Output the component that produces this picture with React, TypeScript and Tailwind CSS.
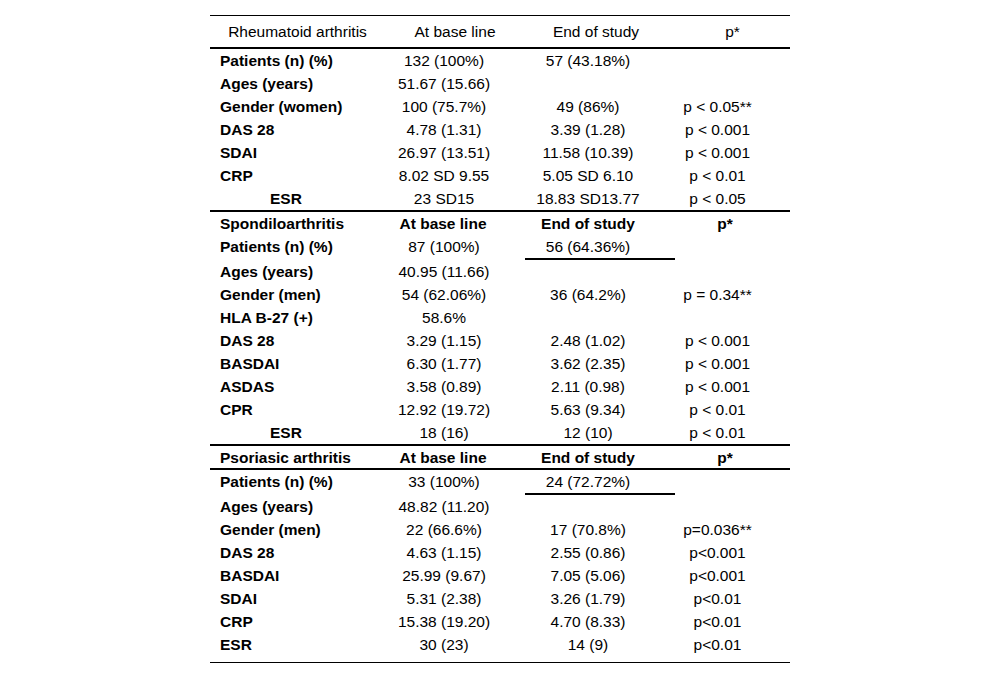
const cols = 'grid grid-cols-[175px_140px_150px_115px]'

type Row = {
  label: string
  base?: string
  end?: string
  p?: string
  indent?: boolean
  underline?: boolean
}

const ra: Row[] = [
  { label: 'Patients (n) (%)', base: '132 (100%)', end: '57 (43.18%)' },
  { label: 'Ages (years)', base: '51.67 (15.66)' },
  { label: 'Gender (women)', base: '100 (75.7%)', end: '49 (86%)', p: 'p < 0.05**' },
  { label: 'DAS 28', base: '4.78 (1.31)', end: '3.39 (1.28)', p: 'p < 0.001' },
  { label: 'SDAI', base: '26.97 (13.51)', end: '11.58 (10.39)', p: 'p < 0.001' },
  { label: 'CRP', base: '8.02 SD 9.55', end: '5.05 SD 6.10', p: 'p < 0.01' },
  { label: 'ESR', base: '23 SD15', end: '18.83 SD13.77', p: 'p < 0.05', indent: true },
]

const spa: Row[] = [
  { label: 'Patients (n) (%)', base: '87 (100%)', end: '56 (64.36%)', underline: true },
  { label: 'Ages (years)', base: '40.95 (11.66)' },
  { label: 'Gender (men)', base: '54 (62.06%)', end: '36 (64.2%)', p: 'p = 0.34**' },
  { label: 'HLA B-27 (+)', base: '58.6%' },
  { label: 'DAS 28', base: '3.29 (1.15)', end: '2.48 (1.02)', p: 'p < 0.001' },
  { label: 'BASDAI', base: '6.30 (1.77)', end: '3.62 (2.35)', p: 'p < 0.001' },
  { label: 'ASDAS', base: '3.58 (0.89)', end: '2.11 (0.98)', p: 'p < 0.001' },
  { label: 'CPR', base: '12.92 (19.72)', end: '5.63 (9.34)', p: 'p < 0.01' },
  { label: 'ESR', base: '18 (16)', end: '12 (10)', p: 'p < 0.01', indent: true },
]

const psa: Row[] = [
  { label: 'Patients (n) (%)', base: '33 (100%)', end: '24 (72.72%)', underline: true },
  { label: 'Ages (years)', base: '48.82 (11.20)' },
  { label: 'Gender (men)', base: '22 (66.6%)', end: '17 (70.8%)', p: 'p=0.036**' },
  { label: 'DAS 28', base: '4.63 (1.15)', end: '2.55 (0.86)', p: 'p<0.001' },
  { label: 'BASDAI', base: '25.99 (9.67)', end: '7.05 (5.06)', p: 'p<0.001' },
  { label: 'SDAI', base: '5.31 (2.38)', end: '3.26 (1.79)', p: 'p<0.01' },
  { label: 'CRP', base: '15.38 (19.20)', end: '4.70 (8.33)', p: 'p<0.01' },
  { label: 'ESR', base: '30 (23)', end: '14 (9)', p: 'p<0.01' },
]

function DataRow({ row, last }: { row: Row; last?: boolean }) {
  return (
    <div className={`${cols} items-start ${last ? 'pb-[6px]' : ''}`}>
      <div className={`h-[23px] leading-[23px] font-bold ${row.indent ? 'pl-[60px]' : 'pl-[10px]'}`}>
        {row.label}
      </div>
      <div className="h-[23px] leading-[23px] text-center pr-[22px]">{row.base}</div>
      <div
        className={`leading-[23px] text-center pr-[24px] ${row.underline ? 'h-[25px] border-b-2 border-black' : 'h-[23px]'}`}
      >
        {row.end}
      </div>
      <div className="h-[23px] leading-[23px] text-center pr-[30px]">{row.p}</div>
    </div>
  )
}

function SectionHead({ title, className }: { title: string; className: string }) {
  return (
    <div className={`${cols} items-center font-bold ${className}`}>
      <div className="pl-[10px]">{title}</div>
      <div className="text-center pr-[24px]">At base line</div>
      <div className="text-center pr-[24px]">End of study</div>
      <div className="text-center pr-[15px]">p*</div>
    </div>
  )
}

export default function App() {
  return (
    <div className="min-h-[678px] bg-white pt-[15px] text-black text-[15.5px] font-['Liberation_Sans',Arial,sans-serif]">
      <div className="w-[580px] mx-auto border-t border-b border-black">
        <div className={`${cols} h-[33px] items-center border-b-2 border-black`}>
          <div className="text-center">Rheumatoid arthritis</div>
          <div className="text-center">At base line</div>
          <div className="text-center pr-[8px]">End of study</div>
          <div className="text-center">p*</div>
        </div>
        <div className="border-b-2 border-black">
          {ra.map(r => (
            <DataRow key={r.label} row={r} />
          ))}
        </div>

        <SectionHead title="Spondiloarthritis" className="h-[23px]" />
        <div className="border-b-2 border-black">
          {spa.map(r => (
            <DataRow key={r.label} row={r} />
          ))}
        </div>

        <SectionHead title="Psoriasic arthritis" className="h-[24px] border-b-2 border-black" />
        {psa.map((r, i) => (
          <DataRow key={r.label} row={r} last={i === psa.length - 1} />
        ))}
      </div>
    </div>
  )
}
